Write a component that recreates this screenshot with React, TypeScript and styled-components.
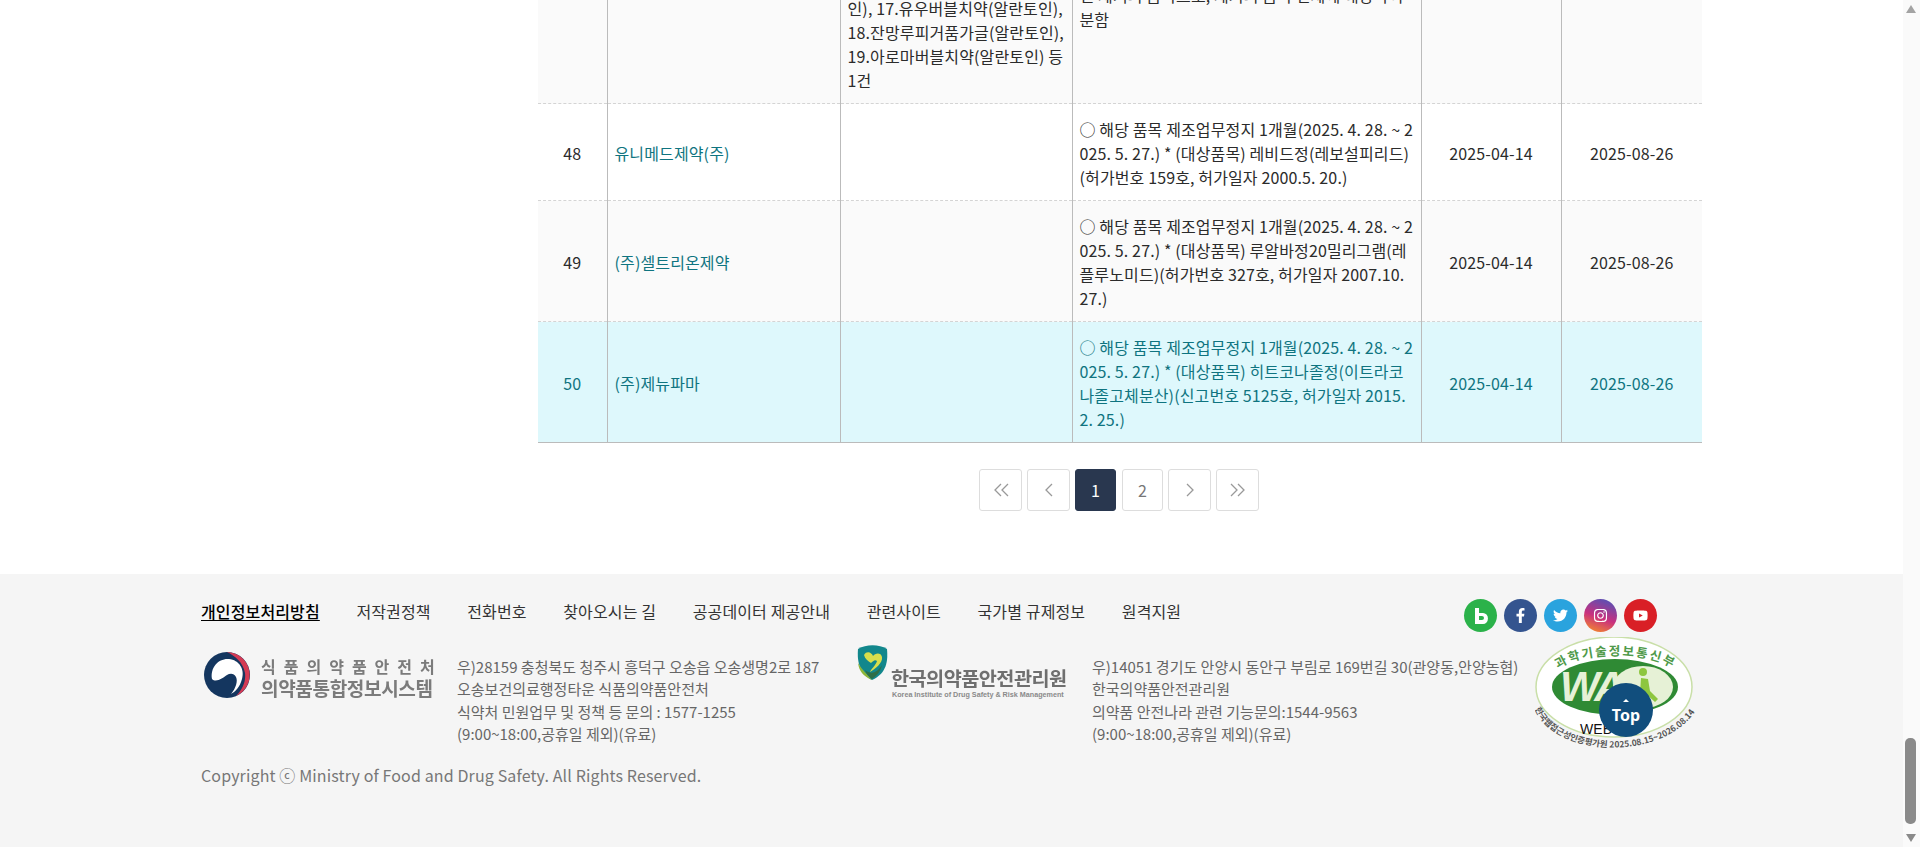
import React from 'react';
import styled, { createGlobalStyle } from 'styled-components';
import { FaFacebookF, FaTwitter, FaInstagram, FaYoutube } from 'react-icons/fa';

const KR = `"Noto Sans CJK KR", "Noto Sans", sans-serif`;

const GlobalStyle = createGlobalStyle`
  html, body {
    margin: 0;
    height: 100%;
    overflow: hidden;
    background: #fff;
  }
  body {
    font-family: ${KR};
    font-size: 16px;
    letter-spacing: 0.13px;
    color: #2b2b2b;
  }
`;

const Page = styled.div`
  position: relative;
  height: 847px;
  overflow: hidden;
  padding-right: 17px;
`;

const Main = styled.main`
  width: 1501px;
  margin: -17px auto 0;
  display: flex;
  flex-direction: column;
  align-items: flex-end;
`;

const BoardTable = styled.table`
  width: 1164px;
  table-layout: fixed;
  border-collapse: collapse;
  border-bottom: 1px solid #bbb;
  font-size: 16px;
  line-height: 24px;
`;

const Row = styled.tr<{ $tone?: 'plain' | 'grey' | 'active' }>`
  border-bottom: 1px dashed #d4d4d4;
  background: ${({ $tone }) => ($tone === 'grey' ? '#fafafa' : $tone === 'active' ? '#def8fc' : '#fff')};
  color: ${({ $tone }) => ($tone === 'active' ? '#0f7480' : '#2b2b2b')};
`;

const Cell = styled.td<{ $center?: boolean; $clipped?: boolean }>`
  padding: ${({ $clipped }) => ($clipped ? '0 7px' : '13px 7px 11px')};
  border-left: 1px solid #bbb;
  text-align: ${({ $center }) => ($center ? 'center' : 'left')};
  vertical-align: ${({ $clipped }) => ($clipped ? 'top' : 'middle')};
  word-break: break-all;
  &:first-child {
    border-left: 0;
  }
`;

const CompanyLink = styled.a`
  color: #0f7480;
  text-decoration: none;
`;

const Pager = styled.nav`
  box-sizing: border-box;
  width: 1165px;
  display: flex;
  justify-content: center;
  gap: 5px;
  padding-right: 1px;
  margin: 26px 0 63px;
`;

const PageButton = styled.a<{ $active?: boolean; $wide?: boolean }>`
  box-sizing: border-box;
  width: ${({ $wide }) => ($wide ? '43px' : '41px')};
  height: 42px;
  margin-right: ${({ $active }) => ($active ? '1px' : '0')};
  display: flex;
  align-items: center;
  justify-content: center;
  border-radius: 3px;
  border: 1px solid ${({ $active }) => ($active ? '#29374f' : '#ddd')};
  background: ${({ $active }) => ($active ? '#29374f' : '#fff')};
  color: ${({ $active }) => ($active ? '#fff' : '#777')};
  font-size: 16px;
`;

const Footer = styled.footer`
  height: 273px;
  background: #f5f5f5;
`;

const FooterInner = styled.div`
  width: 1501px;
  margin: 0 auto;
  padding-top: 25px;
`;

const FooterTop = styled.div`
  display: flex;
  justify-content: space-between;
  align-items: flex-start;
  height: 33px;
  padding-right: 45px;
`;

const FooterNav = styled.ul`
  display: flex;
  gap: 36.6px;
  margin: 0;
  padding: 0;
  list-style: none;
  font-size: 16px;
  line-height: 24px;
`;

const NavItem = styled.li<{ $strong?: boolean }>`
  color: ${({ $strong }) => ($strong ? '#000' : '#333')};
  font-weight: ${({ $strong }) => ($strong ? 500 : 400)};
  text-decoration: ${({ $strong }) => ($strong ? 'underline' : 'none')};
  text-underline-offset: 2px;
`;

const SocialList = styled.div`
  display: flex;
  gap: 7px;
`;

const SocialDot = styled.a<{ $bg: string }>`
  width: 33px;
  height: 33px;
  border-radius: 50%;
  display: flex;
  align-items: center;
  justify-content: center;
  background: ${({ $bg }) => $bg};
  color: #fff;
  font-size: 15px;
`;

const InfoRow = styled.div`
  display: flex;
  margin-top: 13px;
  height: 118px;
`;

const LogoBlock = styled.div<{ $width: number }>`
  width: ${({ $width }) => $width}px;
  flex-shrink: 0;
`;

const Ministry = styled.div`
  display: flex;
  align-items: flex-start;
  gap: 10px;
  padding: 6px 0 0 2px;
`;

const MinistryText = styled.div`
  margin-top: 4px;
  color: #7b7b7b;
  font-weight: 700;
  white-space: nowrap;
  filter: blur(0.3px);
`;

const MinistryTop = styled.div`
  font-size: 16px;
  line-height: 23px;
  letter-spacing: 8px;
`;

const MinistryBottom = styled.div`
  font-size: 19.1px;
  line-height: 20px;
  letter-spacing: -0.4px;
`;

const Address = styled.address<{ $width: number }>`
  width: ${({ $width }) => $width}px;
  flex-shrink: 0;
  padding-top: 11px;
  font-style: normal;
  font-size: 15px;
  letter-spacing: 0;
  line-height: 22.4px;
  color: #666;
  white-space: nowrap;
`;

const Institute = styled.div`
  position: relative;
  height: 70px;
  margin-top: -2px;
  padding-left: 2px;
`;

const InstituteName = styled.div`
  position: absolute;
  left: 37px;
  top: 23px;
  font-size: 19.7px;
  font-weight: 700;
  letter-spacing: -0.55px;
  line-height: 24px;
  color: #6f6f6f;
  white-space: nowrap;
  filter: blur(0.4px);
`;

const InstituteEng = styled.div`
  position: absolute;
  left: 38px;
  top: 48px;
  font-family: "Liberation Sans", sans-serif;
  font-size: 7.2px;
  font-weight: 700;
  letter-spacing: 0;
  line-height: 8px;
  color: #8a8a8a;
  white-space: nowrap;
`;

const Copyright = styled.p`
  margin: 0;
  font-size: 16px;
  line-height: 24px;
  color: #777;
`;

const MarkSlot = styled.div`
  margin-top: -8px;
`;

const TopButton = styled.a`
  position: absolute;
  left: 1599px;
  top: 683px;
  width: 54px;
  height: 54px;
  border-radius: 50%;
  background: #114e7d;
  color: #fff;
  display: flex;
  flex-direction: column;
  align-items: center;
  justify-content: center;
  font-family: "Noto Sans", sans-serif;
  font-size: 16px;
  font-weight: 700;
  line-height: 18px;
  padding-top: 3px;
  box-sizing: border-box;
  &::before {
    content: '';
    border-left: 3px solid transparent;
    border-right: 3px solid transparent;
    border-bottom: 3px solid #fff;
    margin-bottom: 4px;
  }
`;

const Scrollbar = styled.div`
  position: absolute;
  top: 0;
  right: 0;
  bottom: 0;
  width: 17px;
  background: #fafafa;
`;

const ScrollArrow = styled.div<{ $down?: boolean }>`
  position: absolute;
  left: 3px;
  ${({ $down }) => ($down ? 'bottom: 5px;' : 'top: 5px;')}
  width: 0;
  height: 0;
  border-left: 5.5px solid transparent;
  border-right: 5.5px solid transparent;
  ${({ $down }) => ($down ? 'border-top: 8px solid #8a8a8a;' : 'border-bottom: 8px solid #a3a3a3;')}
`;

const ScrollThumb = styled.div`
  position: absolute;
  left: 2px;
  top: 738px;
  width: 11px;
  height: 86px;
  border-radius: 5px;
  background: #8a8a8a;
`;

const TaegeukLogo = () => (
  <svg width="48" height="48" viewBox="0 0 48 48" aria-hidden="true">
    <circle cx="24" cy="24" r="23" fill="#14365f" />
    <path d="M9 28C7 16 16 7 26 8c10 1 16 10 13 20-2 8-7 13-11 15 5-6 7-13 5-17-2-4-6-4-9-2-4 3-11 8-15 4Z" fill="#fff" />
    <path d="M24 1A23 23 0 0 1 33 45c7-7 10-15 9-23C40 11 32 5 24 1Z" fill="#d43a54" />
  </svg>
);

const ShieldLogo = () => (
  <svg width="33" height="38" viewBox="0 0 33 38" aria-hidden="true">
    <path d="M2 6C10 1 23 1 31 6c1 12 0 24-15 31C3 30 1 18 2 6Z" fill="#12878c" />
    <path d="M2 20c5 8 9 11 14 17C7 33 3 28 2 20Z" fill="#8db63a" />
    <path d="M8 12c3-5 8-2 9 1 2-3 8-4 9 1 1 6-7 12-12 15 1-3 6-7 7-11-2-2-4 0-6 2-3-2-6-4-7-8Z" fill="#d8de4c" />
    <path d="M9 27c6 5 12 3 17-5-2 8-6 11-10 14-3-2-6-5-7-9Z" fill="#2e6f47" />
  </svg>
);

const WaMark = () => (
  <svg width="170" height="116" viewBox="0 0 170 116" aria-hidden="true">
    <defs>
      <path id="waTop" d="M23 32C45 14 115 14 138 32" />
      <path id="waBottom" d="M0 72C20 122 140 128 167 62" />
    </defs>
    <ellipse cx="79" cy="50" rx="78" ry="50" fill="#fff" stroke="#c9dfa8" strokeWidth="1.5" />
    <text fontFamily={KR} fontSize="12.5" fontWeight="700" fill="#4f9a4a" letterSpacing="1.8">
      <textPath href="#waTop">과학기술정보통신부</textPath>
    </text>
    <ellipse cx="80" cy="50" rx="63" ry="28" fill="#2f8a34" />
    <ellipse cx="108" cy="50" rx="30" ry="21" fill="#e6f1d6" />
    <circle cx="108" cy="35" r="4" fill="#8dc63f" />
    <path d="M106 41l7 1 2 12 8 8-3 3-9-8-6-1Z" fill="#8dc63f" />
    <text x="25" y="64" fontFamily={'"Liberation Sans", sans-serif'} fontSize="42" fontWeight="700" fontStyle="italic" fill="#e6f1d6" letterSpacing="-3">WA</text>
    <text x="45" y="97" fontFamily={'"Liberation Sans", sans-serif'} fontSize="14" fill="#111">WEB</text>
    <text fontFamily={KR} fontSize="8.5" fontWeight="700" fill="#555" letterSpacing="0">
      <textPath href="#waBottom">한국웹접근성인증평가원 2025.08.15~2026.08.14</textPath>
    </text>
  </svg>
);

const Chevron = ({ dir, double }: { dir: 'left' | 'right'; double?: boolean }) => (
  <svg width="18" height="16" viewBox="0 0 18 16" fill="none" stroke="#999" strokeWidth="1.3" aria-hidden="true">
    {dir === 'left' ? (
      double ? (
        <path d="M9 2 3 8l6 6M16 2l-6 6 6 6" />
      ) : (
        <path d="M12 2 6 8l6 6" />
      )
    ) : double ? (
      <path d="M2 2l6 6-6 6M9 2l6 6-6 6" />
    ) : (
      <path d="M6 2l6 6-6 6" />
    )}
  </svg>
);

const rows = [
  {
    no: '48',
    name: '유니메드제약(주)',
    tone: 'plain' as const,
    body: '○ 해당 품목 제조업무정지 1개월(2025. 4. 28. ~ 2025. 5. 27.) * (대상품목) 레비드정(레보설피리드)(허가번호 159호, 허가일자 2000.5. 20.)',
  },
  {
    no: '49',
    name: '(주)셀트리온제약',
    tone: 'grey' as const,
    body: '○ 해당 품목 제조업무정지 1개월(2025. 4. 28. ~ 2025. 5. 27.) * (대상품목) 루알바정20밀리그램(레플루노미드)(허가번호 327호, 허가일자 2007.10. 27.)',
  },
  {
    no: '50',
    name: '(주)제뉴파마',
    tone: 'active' as const,
    body: '○ 해당 품목 제조업무정지 1개월(2025. 4. 28. ~ 2025. 5. 27.) * (대상품목) 히트코나졸정(이트라코나졸고체분산)(신고번호 5125호, 허가일자 2015. 2. 25.)',
  },
];

const navItems = ['저작권정책', '전화번호', '찾아오시는 길', '공공데이터 제공안내', '관련사이트', '국가별 규제정보', '원격지원'];

export default function App() {
  return (
    <>
      <GlobalStyle />
      <Page>
        <Main>
          <BoardTable>
            <colgroup>
              <col width="69" />
              <col width="233" />
              <col width="232" />
              <col width="349" />
              <col width="140" />
              <col width="141" />
            </colgroup>
            <tbody>
              <Row $tone="grey">
                <Cell $center />
                <Cell />
                <Cell>인), 17.유우버블치약(알란토인), 18.잔망루피거품가글(알란토인), 19.아로마버블치약(알란토인) 등 1건</Cell>
                <Cell $clipped>된 제거의 품목으로, 제거의 품목 전체에 해당하여 분함</Cell>
                <Cell $center />
                <Cell $center />
              </Row>
              {rows.map((row) => (
                <Row key={row.no} $tone={row.tone}>
                  <Cell $center>{row.no}</Cell>
                  <Cell>
                    <CompanyLink>{row.name}</CompanyLink>
                  </Cell>
                  <Cell />
                  <Cell>{row.body}</Cell>
                  <Cell $center>2025-04-14</Cell>
                  <Cell $center>2025-08-26</Cell>
                </Row>
              ))}
            </tbody>
          </BoardTable>
          <Pager>
            <PageButton $wide><Chevron dir="left" double /></PageButton>
            <PageButton $wide><Chevron dir="left" /></PageButton>
            <PageButton $active>1</PageButton>
            <PageButton>2</PageButton>
            <PageButton $wide><Chevron dir="right" /></PageButton>
            <PageButton $wide><Chevron dir="right" double /></PageButton>
          </Pager>
        </Main>
        <Footer>
          <FooterInner>
            <FooterTop>
              <FooterNav>
                <NavItem $strong>개인정보처리방침</NavItem>
                {navItems.map((item) => (
                  <NavItem key={item}>{item}</NavItem>
                ))}
              </FooterNav>
              <SocialList>
                <SocialDot $bg="#2bb24a">
                  <svg width="14" height="16" viewBox="0 0 14 16" aria-hidden="true">
                    <path d="M1 0h4v5h4a4.5 5 0 0 1 0 11H1Zm4 8v4h3a2 2 0 0 0 0-4Z" fill="#fff" />
                  </svg>
                </SocialDot>
                <SocialDot $bg="#34548f"><FaFacebookF /></SocialDot>
                <SocialDot $bg="#2aa3de"><FaTwitter /></SocialDot>
                <SocialDot $bg="linear-gradient(200deg, #5b4fb3 10%, #c9307e 55%, #f58a2b 95%)"><FaInstagram /></SocialDot>
                <SocialDot $bg="#d91f26"><FaYoutube /></SocialDot>
              </SocialList>
            </FooterTop>
            <InfoRow>
              <LogoBlock $width={256}>
                <Ministry>
                  <TaegeukLogo />
                  <MinistryText>
                    <MinistryTop>식품의약품안전처</MinistryTop>
                    <MinistryBottom>의약품통합정보시스템</MinistryBottom>
                  </MinistryText>
                </Ministry>
              </LogoBlock>
              <Address $width={397}>
                우)28159 충청북도 청주시 흥덕구 오송읍 오송생명2로 187<br />
                오송보건의료행정타운 식품의약품안전처<br />
                식약처 민원업무 및 정책 등 문의 : 1577-1255<br />
                (9:00~18:00,공휴일 제외)(유료)
              </Address>
              <LogoBlock $width={238}>
                <Institute>
                  <ShieldLogo />
                  <InstituteName>한국의약품안전관리원</InstituteName>
                  <InstituteEng>Korea Institute of Drug Safety &amp; Risk Management</InstituteEng>
                </Institute>
              </LogoBlock>
              <Address $width={443}>
                우)14051 경기도 안양시 동안구 부림로 169번길 30(관양동,안양농협)<br />
                한국의약품안전관리원<br />
                의약품 안전나라 관련 기능문의:1544-9563<br />
                (9:00~18:00,공휴일 제외)(유료)
              </Address>
              <MarkSlot>
                <WaMark />
              </MarkSlot>
            </InfoRow>
            <Copyright>Copyright ⓒ Ministry of Food and Drug Safety. All Rights Reserved.</Copyright>
          </FooterInner>
        </Footer>
        <TopButton>Top</TopButton>
        <Scrollbar>
          <ScrollArrow />
          <ScrollThumb />
          <ScrollArrow $down />
        </Scrollbar>
      </Page>
    </>
  );
}
